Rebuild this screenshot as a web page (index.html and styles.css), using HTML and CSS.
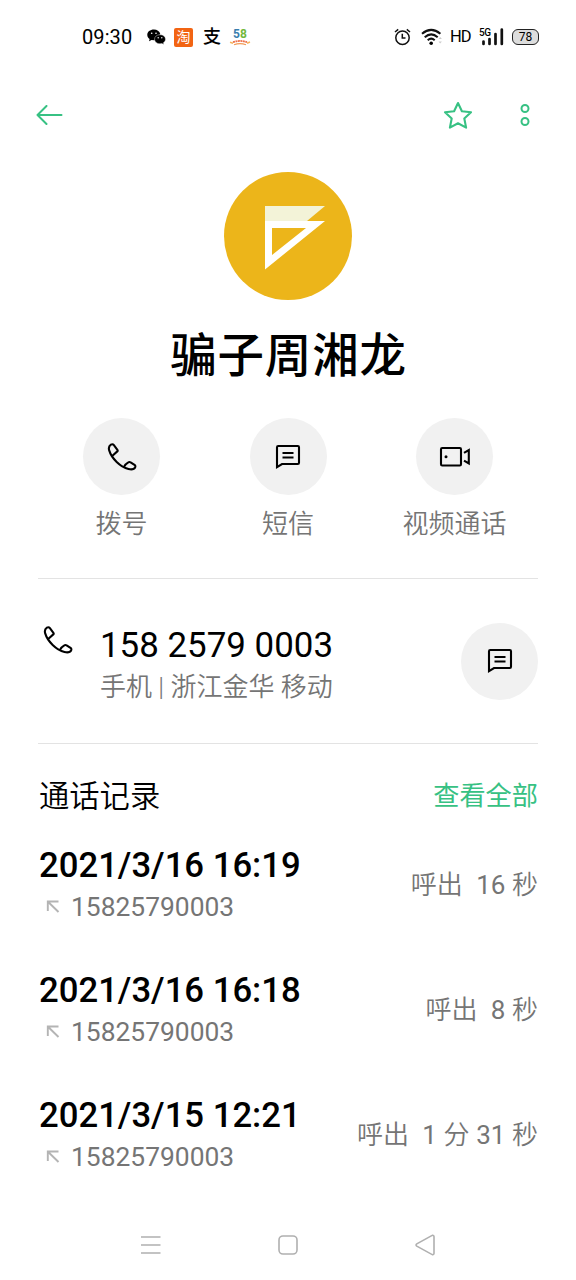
FILE: index.html
```html
<!DOCTYPE html>
<html lang="zh-CN">
<head>
<meta charset="utf-8">
<title>联系人</title>
<link rel="stylesheet" href="styles.css">
</head>
<body>
<svg class="defs" width="0" height="0" aria-hidden="true">
  <symbol id="phone" viewBox="0 0 30 30"><path d="M2.200 8.400C1.500 6 2.300 3.700 3.900 2.700c1.200-.7 2.300-.4 3 .5l3.500 4.700q.6.800-.1 1.500L6 13.200M2.200 8.400C4.500 16.300 13.400 25 21.500 27c2.600.6 5.800.1 6.700-1.800.4-1 .1-1.700-.7-2.300l-3.900-2.600q-1.200-.7-2.300 0-3 1.700-4.100 4.300" fill="none" stroke="#000" stroke-width="2.100" stroke-linejoin="round" stroke-linecap="round"/></symbol>
  <symbol id="message" viewBox="0 0 26 26"><path d="M2 23.200V3.200Q2 2 3.200 2H22.800Q24 2 24 3.200V18.800Q24 20 22.800 20H7Z" fill="none" stroke="#000" stroke-width="2.100"/><path d="M7.500 9h11M7.500 13.600h11" stroke="#000" stroke-width="2"/></symbol>
  <symbol id="outgoing" viewBox="0 0 14 14"><path d="M12.500 1.500H1.800V11M2 1.700L12.500 12" fill="none" stroke="#b4b4b4" stroke-width="1.900"/></symbol>
</svg>
<header class="status">
  <span class="clock">09:30</span>
  <svg class="wechat" width="19" height="16" viewBox="0 0 19 16"><path d="M7 .5C3 .5.300 2.900.300 5.900c0 1.700.9 3.200 2.300 4.200L2 12.200l2.500-1.200 2.800.3L13.300 5C12.500 2.200 10 .5 7 .5Z"/><path d="M13 5.700c-3.200 0-5.500 2-5.500 4.500s2.300 4.600 5.500 4.600l1.900-.3 2 1.100-.5-1.900c1.300-.8 2.100-2.100 2.100-3.500 0-2.500-2.300-4.500-5.500-4.500Z" stroke="#fff" stroke-width=".4"/><g fill="#fff"><circle cx="4.700" cy="4.200" r=".8"/><circle cx="9" cy="4.200" r=".8"/><circle cx="11.200" cy="8.800" r=".7"/><circle cx="14.800" cy="8.800" r=".7"/></g></svg>
  <span class="taobao">淘</span>
  <span class="alipay">支</span>
  <span class="app58"><span class="digits"><b class="five">5</b><b class="eight">8</b></span><svg width="22" height="6" viewBox="0 0 22 6"><path d="M1 2.300L4 3.200M18 3.200L21 2" stroke="#f5b45c" stroke-width="1.500"/><path d="M4 2.200Q11-.3 18 2.200" fill="none" stroke="#ee7048" stroke-width="1.800" stroke-dasharray="2 .5"/><path d="M5 4.800Q11 2.500 17 4.800" fill="none" stroke="#f39a54" stroke-width="1.100"/></svg></span>
  <span class="status-right">
    <svg width="17" height="18" viewBox="0 0 17 18" fill="none" stroke="#111" stroke-width="1.500"><circle cx="8.500" cy="9.700" r="6.700"/><path d="M8.300 5.800v4.300h3.200M1 4L4.200 1.400M12.800 1.400L16 4"/></svg>
    <svg class="wifi" width="22" height="18" viewBox="0 0 22 18"><g fill="none" stroke="#111" stroke-width="2"><path d="M1 5.800Q10.200-2 19.400 5.800M3.700 9.200Q10.200 3.500 16.700 9.200M6.700 12.200Q10.200 9 13.700 12.200"/></g><circle cx="10.200" cy="15.300" r="1.800"/><path d="M17.500 11l1.700-2 1.700 2zM17.500 13.500l1.700 2 1.700-2z" fill="#ccc"/></svg>
    <span class="hd">HD</span>
    <span class="signal"><span class="g5">5G</span><svg width="25" height="18" viewBox="0 0 25 18"><path d="M4.500 13.500V16M10.500 11V16M16.500 6V16M22.800 1.500V16" stroke="#111" stroke-width="2.700" stroke-linecap="round"/></svg></span>
    <span class="battery">78</span>
  </span>
</header>
<nav class="toolbar">
  <svg width="28" height="20" viewBox="0 0 28 20" fill="none" stroke="#37c183" stroke-width="2" stroke-linecap="round" stroke-linejoin="round"><path d="M25.500 10H1.500M10.500 1L1.500 10l9 9"/></svg>
  <svg class="star" width="30" height="29" viewBox="0 0 30 29"><path d="M15 2L18.900 10.200 28 11.300 21.300 17.500 23.100 26.600 15 22.300 6.900 26.600 8.700 17.500 2 11.300 11.100 10.200Z" fill="none" stroke="#37c183" stroke-width="2.100" stroke-linejoin="round"/></svg>
  <svg width="10" height="24" viewBox="0 0 10 24" fill="none" stroke="#37c183" stroke-width="2"><circle cx="5" cy="5.500" r="3.500"/><circle cx="5" cy="18.500" r="3.500"/></svg>
</nav>
<section class="profile">
  <svg width="128" height="128" viewBox="0 0 128 128"><circle cx="64" cy="64" r="64" fill="#ecb51a"/><path d="M41 34H101L83 49H41Z" fill="#f3f3d8"/><path fill-rule="evenodd" d="M41 49H101L41 97.500ZM48 56V83L82 56Z" fill="#fff"/></svg>
  <h1>骗子周湘龙</h1>
</section>
<section class="actions">
  <div class="action"><span class="circle"><svg width="30" height="30"><use href="#phone"/></svg></span><span class="label">拨号</span></div>
  <div class="action"><span class="circle"><svg width="26" height="26"><use href="#message"/></svg></span><span class="label">短信</span></div>
  <div class="action"><span class="circle"><svg class="video" width="32" height="22" viewBox="0 0 32 22" fill="none" stroke="#000" stroke-width="2.100"><rect x="2" y="2" width="20" height="17.500" rx="1.200"/><path d="M25 6.800L29.800 4V17.500L25 14.700"/><circle cx="7" cy="10.700" r="1.500" fill="#000" stroke="none"/></svg></span><span class="label">视频通话</span></div>
</section>
<section class="number">
  <svg class="lead" width="30" height="30"><use href="#phone"/></svg>
  <div class="number-text"><div class="digits-main">158 2579 0003</div><div class="place">手机 | 浙江金华 移动</div></div>
  <span class="circle"><svg width="26" height="26"><use href="#message"/></svg></span>
</section>
<section class="history">
  <div class="history-head"><h2>通话记录</h2><a class="all">查看全部</a></div>
  <div class="record"><div><div class="date">2021/3/16 16:19</div><div class="caller"><svg width="14" height="14"><use href="#outgoing"/></svg>15825790003</div></div><div class="duration">呼出&nbsp; <span class="n">16</span> 秒</div></div>
  <div class="record"><div><div class="date">2021/3/16 16:18</div><div class="caller"><svg width="14" height="14"><use href="#outgoing"/></svg>15825790003</div></div><div class="duration">呼出&nbsp; <span class="n">8</span> 秒</div></div>
  <div class="record"><div><div class="date">2021/3/15 12:21</div><div class="caller"><svg width="14" height="14"><use href="#outgoing"/></svg>15825790003</div></div><div class="duration">呼出&nbsp; <span class="n">1</span> 分 <span class="n">31</span> 秒</div></div>
</section>
<footer class="navbar">
  <svg width="20" height="20" viewBox="0 0 20 20" stroke="#b0b0b0" stroke-width="1.700"><path d="M0 2H19.500M0 10H19.500M0 18H19.500"/></svg>
  <svg width="20" height="20" viewBox="0 0 20 20" fill="none" stroke="#b0b0b0" stroke-width="1.600"><rect x="1" y="1" width="18" height="18" rx="4"/></svg>
  <svg width="20" height="22" viewBox="0 0 20 22" fill="none" stroke="#b0b0b0" stroke-width="1.600"><path d="M17.200 1.400L1.800 9.900Q.3 11 1.800 12.100L17.200 20.600Q19 21 19 19.300V2.700Q19 1 17.200 1.400Z"/></svg>
</footer>
</body>
</html>
```
FILE: styles.css
```css
* { box-sizing: border-box; }
body {
  margin: 0;
  width: 576px;
  height: 1280px;
  background: #fff;
  color: #000;
  font-family: Roboto, "Noto Sans CJK SC", sans-serif;
  white-space: nowrap;
  overflow: hidden;
}
svg { display: block; flex: none; }
.defs { position: absolute; }
.status {
  height: 74px;
  padding: 0 37px 0 82px;
  display: flex;
  align-items: center;
}
.clock { width: 65px; font-size: 20px; letter-spacing: .1px; }
.taobao {
  width: 19px;
  height: 19px;
  margin-left: 8px;
  border-radius: 2px;
  background: #f26413;
  color: #fff;
  font-size: 14px;
  line-height: 18px;
  text-align: center;
}
.alipay { width: 18px; margin-left: 10px; font-size: 18px; line-height: 20px; font-weight: 500; }
.app58 { width: 22px; margin-left: 8px; display: flex; flex-direction: column; align-items: center; }
.digits { font-size: 12px; line-height: 11px; }
.five { color: #397eae; }
.eight { color: #72b83d; }
.status-right { margin-left: auto; display: flex; align-items: center; }
.wifi { margin-left: 10px; }
.hd { margin-left: 7px; width: 21px; font-size: 16.500px; line-height: 20px; letter-spacing: -1px; }
.signal { position: relative; margin-left: 8px; }
.g5 { position: absolute; left: 0; top: 0; font-size: 10px; line-height: 9px; font-weight: 500; letter-spacing: -.5px; }
.battery {
  width: 27px;
  height: 16px;
  margin-left: 8px;
  border: 1.500px solid #222;
  border-radius: 6px;
  background: #ddd;
  font-size: 12px;
  line-height: 14px;
  text-align: center;
}
.toolbar { height: 82px; padding: 0 46px 0 36px; display: flex; align-items: center; }
.star { margin-left: auto; margin-right: 47px; }
.profile { height: 262px; padding-top: 16px; display: flex; flex-direction: column; align-items: center; }
h1 { margin: 26px 0 0 1px; font-size: 46.500px; line-height: 60px; font-weight: 500; letter-spacing: .8px; }
.actions {
  height: 161px;
  margin: 0 38px;
  border-bottom: 1px solid #e3e3e3;
  display: grid;
  grid-template-columns: repeat(3, 166.500px);
  justify-content: center;
}
.action { display: flex; flex-direction: column; align-items: center; }
.circle {
  width: 77px;
  height: 77px;
  border-radius: 50%;
  background: #f1f1f1;
  display: flex;
  align-items: center;
  justify-content: center;
  flex: none;
}
.label { margin-top: 13px; font-size: 26px; line-height: 32px; color: #757575; font-weight: 350; }
.number {
  height: 165px;
  margin: 0 38px;
  border-bottom: 1px solid #e3e3e3;
  display: flex;
  align-items: center;
}
.lead { margin: -42px 0 0 5px; }
.number-text { margin-left: 27px; flex: 1; padding-top: 9px; }
.digits-main { font-size: 34.900px; line-height: 42px; }
.place { font-size: 26px; line-height: 40px; font-weight: 350; color: #757575; }
.history { height: 466px; padding: 32px 38px 0; }
.history-head { height: 40px; display: flex; align-items: center; justify-content: space-between; }
h2 { margin: 2px 0 0 1px; font-size: 30.300px; line-height: 40px; font-weight: 350; }
.all { font-size: 26.200px; line-height: 36px; color: #37c183; font-weight: 400; }
.record { height: 125px; padding-top: 25px; display: flex; justify-content: space-between; align-items: flex-start; }
.date { margin-left: 1px; font-size: 34.700px; line-height: 48px; font-weight: 500; }
.caller { display: flex; align-items: center; gap: 11px; padding-left: 8px; font-size: 26.400px; line-height: 36px; color: #757575; }
.duration { margin-top: 26px; font-size: 26px; line-height: 36px; color: #757575; font-weight: 350; word-spacing: .3px; }
.n { font-weight: 400; }
.navbar { height: 70px; padding: 0 141px; display: flex; align-items: center; justify-content: space-between; }
```
